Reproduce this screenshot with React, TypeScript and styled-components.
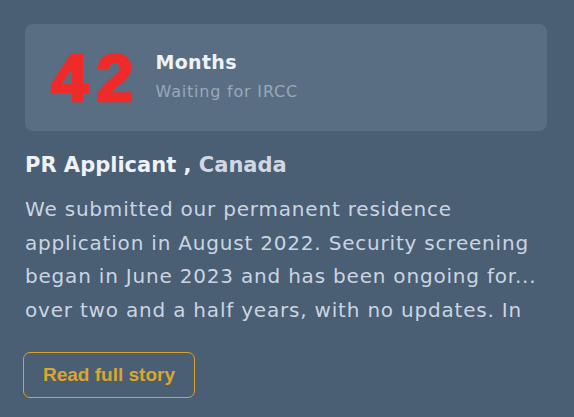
import React from "react";
import styled, { createGlobalStyle } from "styled-components";

const Global = createGlobalStyle`
  html, body { margin: 0; padding: 0; background: #4a5e74; }
  body { font-family: "DejaVu Sans", "Open Sans", sans-serif; }
`;

const Page = styled.div`
  width: 574px;
  height: 417px;
  box-sizing: border-box;
  padding: 24px 27px 0 25px;
  background: #4a5e74;
  overflow: hidden;
`;

const StatCard = styled.div`
  display: flex;
  align-items: center;
  gap: 14px;
  height: 107px;
  box-sizing: border-box;
  padding: 0 0 0 26px;
  background: #5a6e83;
  border-radius: 8px;
`;

const BigNumber = styled.div`
  font-family: "Liberation Sans", Arial, sans-serif;
  font-weight: 900;
  font-size: 67px;
  line-height: 1;
  color: #ee2a2a;
  letter-spacing: 8px;
  -webkit-text-stroke: 2.5px #ee2a2a;
`;

const StatText = styled.div`
  display: flex;
  flex-direction: column;
  gap: 9px;
  margin-top: -4px;
`;

const StatTitle = styled.div`
  font-weight: 700;
  font-size: 19px;
  color: #eef2f8;
  letter-spacing: 0.3px;
`;

const StatSub = styled.div`
  font-size: 16px;
  color: #97a8bb;
  letter-spacing: 0.8px;
`;

const Heading = styled.h2`
  margin: 19px 0 0;
  font-size: 21px;
  font-weight: 700;
  color: #eef2f8;
  line-height: 30px;
`;

const Country = styled.span`
  color: #cfd8e3;
`;

const Body = styled.p`
  margin: 13px 0 0;
  font-size: 20px;
  line-height: 33.5px;
  color: #cbd5e2;
  letter-spacing: 0.8px;
  white-space: pre;
`;

const StoryButton = styled.button`
  margin-top: 25px;
  margin-left: -2px;
  width: 172px;
  height: 46px;
  border: 1px solid #d9a22a;
  border-radius: 7px;
  background: transparent;
  color: #dba62c;
  font-family: "Liberation Sans", Arial, sans-serif;
  font-weight: 700;
  font-size: 19px;
  cursor: pointer;
`;

export default function App() {
  return (
    <Page>
      <Global />
      <StatCard>
        <BigNumber>42</BigNumber>
        <StatText>
          <StatTitle>Months</StatTitle>
          <StatSub>Waiting for IRCC</StatSub>
        </StatText>
      </StatCard>
      <Heading>
        PR Applicant , <Country>Canada</Country>
      </Heading>
      <Body>
        {"We submitted our permanent residence\napplication in August 2022. Security screening\nbegan in June 2023 and has been ongoing for...\nover two and a half years, with no updates. In"}
      </Body>
      <StoryButton>Read full story</StoryButton>
    </Page>
  );
}
